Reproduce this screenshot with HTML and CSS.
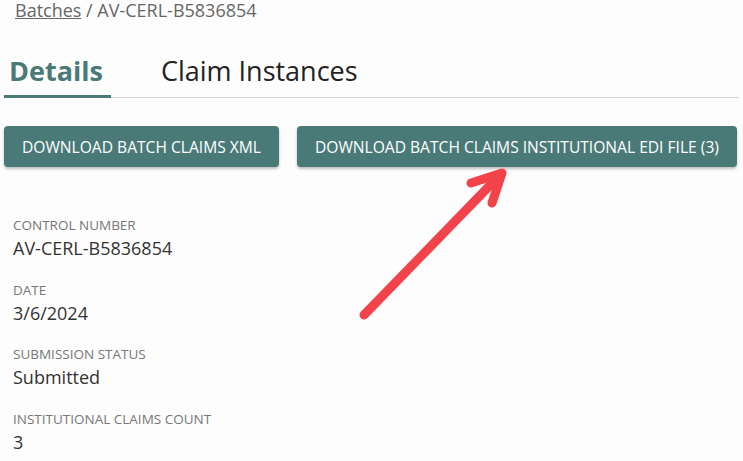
FILE: index.html
```html
<!DOCTYPE html>
<html>
<head>
<meta charset="utf-8">
<link rel="stylesheet" href="styles.css">
</head>
<body>
<div class="page">
  <div class="breadcrumb"><a class="crumb-link">Batches</a> / AV-CERL-B5836854</div>
  <div class="tabs">
    <div class="tab active">Details</div>
    <div class="tab">Claim Instances</div>
  </div>
  <div class="actions">
    <button class="btn">DOWNLOAD BATCH CLAIMS XML</button>
    <button class="btn">DOWNLOAD BATCH CLAIMS INSTITUTIONAL EDI FILE (3)</button>
  </div>
  <div class="fields">
    <div class="field">
      <div class="label">CONTROL NUMBER</div>
      <div class="value">AV-CERL-B5836854</div>
    </div>
    <div class="field">
      <div class="label">DATE</div>
      <div class="value">3/6/2024</div>
    </div>
    <div class="field">
      <div class="label">SUBMISSION STATUS</div>
      <div class="value">Submitted</div>
    </div>
    <div class="field">
      <div class="label">INSTITUTIONAL CLAIMS COUNT</div>
      <div class="value">3</div>
    </div>
  </div>
  <svg class="arrow" width="743" height="461" viewBox="0 0 743 461">
    <g stroke="#f2434a" stroke-width="9" stroke-linecap="round" stroke-linejoin="round" fill="none">
      <line x1="364" y1="315" x2="500" y2="175"/>
      <polyline points="471,183 502,173 492,203"/>
    </g>
  </svg>
</div>
</body>
</html>
```

FILE: styles.css
```css
html, body {
  margin: 0;
  padding: 0;
  background: #fdfdfd;
}
body {
  font-family: "Open Sans", "Liberation Sans", sans-serif;
  color: #333;
  width: 743px;
  height: 461px;
  overflow: hidden;
}
.page {
  position: relative;
  padding: 0 4px;
}
.breadcrumb {
  font-size: 18px;
  line-height: 20px;
  color: #666;
  padding-left: 11px;
}
.crumb-link {
  color: #666;
  text-decoration: underline;
}
.tabs {
  display: flex;
  margin-top: 31px;
  border-bottom: 1px solid #d4d4d4;
  gap: 45px;
}
.tab {
  font-size: 27px;
  line-height: 36px;
  padding: 2px 8px 6px 5px;
  color: #222;
  margin-bottom: -1px;
  border-bottom: 3px solid transparent;
}
.tab.active {
  color: #4a7a78;
  font-weight: 700;
  border-bottom-color: #4a7a78;
}
.actions {
  display: flex;
  gap: 18px;
  margin-top: 28px;
}
.btn {
  flex-shrink: 0;
  white-space: nowrap;
  font-family: inherit;
  font-size: 15.6px;
  color: #fff;
  background: #4a7a78;
  border: none;
  border-radius: 4px;
  height: 41px;
  padding: 0 18px;
  box-shadow: 0 2px 3px rgba(0,0,0,0.25);
}
.fields {
  display: flex;
  flex-direction: column;
  margin-top: 47px;
  padding-left: 9px;
  gap: 18.5px;
}
.field {
  display: flex;
  flex-direction: column;
}
.label {
  font-size: 13.5px;
  line-height: 22px;
  color: #777;
}
.value {
  font-size: 18px;
  line-height: 24px;
  color: #333;
}
.arrow {
  position: absolute;
  left: 0;
  top: 0;
  pointer-events: none;
}
```
